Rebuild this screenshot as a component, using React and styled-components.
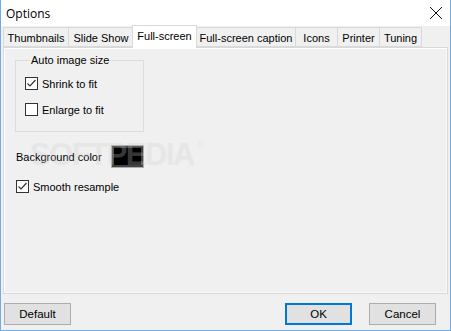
import React from "react"
import styled, { createGlobalStyle } from "styled-components"

const Global = createGlobalStyle`
  html, body {
    margin: 0;
    padding: 0;
    background: #f0f0f0;
  }
  * {
    box-sizing: border-box;
  }
`

const TABS = [
  { label: "Thumbnails", width: 65 },
  { label: "Slide Show", width: 65 },
  { label: "Full-screen", width: 65, active: true },
  { label: "Full-screen caption", width: 99 },
  { label: "Icons", width: 42 },
  { label: "Printer", width: 42 },
  { label: "Tuning", width: 43 },
]

const Window = styled.div`
  width: 451px;
  height: 331px;
  background: #f0f0f0;
  border: 1px solid #6eaee8;
  border-top: none;
  display: flex;
  flex-direction: column;
  font-family: "Liberation Sans", Arial, sans-serif;
  font-size: 11px;
  color: #000;
  position: relative;
  overflow: hidden;
`

const TitleBar = styled.div`
  height: 26px;
  background: #fff;
  display: flex;
  align-items: center;
  justify-content: space-between;
  padding: 0 0 0 5px;
  font-family: "Open Sans", "Liberation Sans", sans-serif;
  font-size: 12px;
`

const CloseButton = styled.div`
  width: 28px;
  display: flex;
  justify-content: center;
`

const Body = styled.div`
  flex: 1;
  display: flex;
  flex-direction: column;
  padding: 0 2px 0 2px;
`

const TabStrip = styled.div`
  display: flex;
  align-items: flex-end;
  height: 22px;
  position: relative;
  z-index: 2;
  margin-bottom: -1px;
`

const Tab = styled.div`
  width: ${(p) => p.$width}px;
  height: ${(p) => (p.$active ? 23 : 20)}px;
  margin-bottom: ${(p) => (p.$active ? 0 : 1)}px;
  margin-left: ${(p) => (p.$active ? -1 : 0)}px;
  margin-right: ${(p) => (p.$active ? -1 : 0)}px;
  background: ${(p) => (p.$active ? "#fff" : "#f0f0f0")};
  border: 1px solid #d9d9d9;
  border-bottom: ${(p) => (p.$active ? "none" : "1px solid #d9d9d9")};
  border-right: ${(p) => (p.$active || p.$last ? "1px solid #d9d9d9" : "none")};
  display: flex;
  align-items: center;
  justify-content: center;
  padding-top: ${(p) => (p.$active ? 0 : 1)}px;
  padding-bottom: ${(p) => (p.$active ? 3 : 0)}px;
  white-space: nowrap;
`

const Panel = styled.div`
  height: 247px;
  border: 1px solid #d9d9d9;
  background: #f0f0f0;
  box-shadow: inset 1px 1px 0 #fff, inset -1px -1px 0 #f9f9f9;
  padding: 6px 0 0 11px;
  display: flex;
  flex-direction: column;
  align-items: flex-start;
  position: relative;
`

const GroupBox = styled.fieldset`
  margin: 0;
  width: 129px;
  height: 78px;
  border: 1px solid #dcdcdc;
  padding: 11px 0 0 9px;
  display: flex;
  flex-direction: column;
  gap: 13px;

  legend {
    padding: 0 1px;
    margin-left: 5px;
    line-height: 12px;
  }
`

const CheckRow = styled.label`
  display: flex;
  align-items: center;
  gap: 4px;
  height: 13px;
  margin-left: ${(p) => p.$indent || 0}px;
  margin-top: ${(p) => p.$top || 0}px;
`

const Box = styled.span`
  width: 13px;
  height: 13px;
  border: 1px solid #333;
  background: #fff;
  display: flex;
  align-items: center;
  justify-content: center;
`

const ColorRow = styled.div`
  display: flex;
  align-items: center;
  margin-top: 13px;
  margin-left: 1px;

  span {
    width: 95px;
  }
`

const Swatch = styled.div`
  width: 33px;
  height: 23px;
  background: #000;
  border: 1px solid #adadad;
  box-shadow: inset 0 0 0 2px #444;
`

const Watermark = styled.div`
  position: absolute;
  left: 26px;
  top: 91px;
  font-family: "Liberation Sans", Arial, sans-serif;
  font-weight: bold;
  font-size: 31px;
  line-height: 31px;
  letter-spacing: -1.5px;
  color: rgba(255, 255, 255, 0.22);
  text-shadow: 0 0 1px rgba(0, 0, 0, 0.07);
  pointer-events: none;

  sup {
    font-size: 9px;
    font-weight: normal;
    vertical-align: top;
    line-height: 12px;
    margin-left: 3px;
  }
`

const Footer = styled.div`
  flex: 1;
  display: flex;
  align-items: flex-start;
  padding: 9px 12px 0 1px;
  gap: 17px;
`

const Spacer = styled.div`
  flex: 1;
`

const Button = styled.div`
  width: 67px;
  height: 22px;
  background: #e1e1e1;
  border: ${(p) => (p.$default ? "2px solid #0078d7" : "1px solid #adadad")};
  display: flex;
  align-items: center;
  justify-content: center;
  font-size: 11.5px;
`

const Check = () => (
  <svg width="11" height="11" viewBox="0 0 11 11">
    <path d="M1.5 5.5 L4 8 L9.5 2" fill="none" stroke="#333" strokeWidth="1.2" />
  </svg>
)

const Checkbox = ({ checked, label, ...rest }) => (
  <CheckRow {...rest}>
    <Box>{checked && <Check />}</Box>
    <span>{label}</span>
  </CheckRow>
)

export default function App() {
  return (
    <>
      <Global />
      <Window>
        <TitleBar>
          <span>Options</span>
          <CloseButton>
            <svg width="14" height="14" viewBox="0 0 14 14">
              <path d="M1 1 L13 13 M13 1 L1 13" stroke="#111" strokeWidth="1" />
            </svg>
          </CloseButton>
        </TitleBar>
        <Body>
          <TabStrip>
            {TABS.map((t, i) => (
              <Tab
                key={t.label}
                $width={t.width}
                $active={t.active}
                $last={i === TABS.length - 1}
              >
                {t.label}
              </Tab>
            ))}
          </TabStrip>
          <Panel>
            <GroupBox>
              <legend>Auto image size</legend>
              <Checkbox checked label="Shrink to fit" />
              <Checkbox label="Enlarge to fit" />
            </GroupBox>
            <ColorRow>
              <span>Background color</span>
              <Swatch />
            </ColorRow>
            <Checkbox checked label="Smooth resample" $indent={1} $top={12} />
            <Watermark>
              SOFTPEDIA<sup>®</sup>
            </Watermark>
          </Panel>
          <Footer>
            <Button>Default</Button>
            <Spacer />
            <Button $default>OK</Button>
            <Button>Cancel</Button>
          </Footer>
        </Body>
      </Window>
    </>
  )
}
